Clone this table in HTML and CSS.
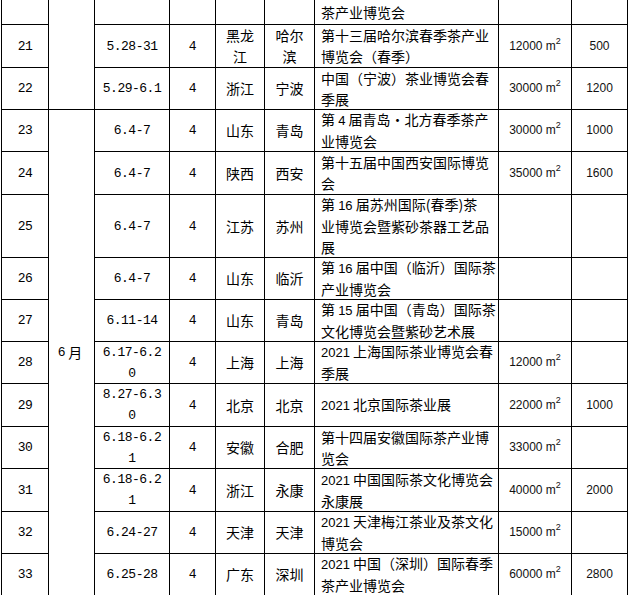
FILE: index.html
```html
<!DOCTYPE html>
<html lang="zh-CN">
<head>
<meta charset="utf-8">
<title>茶业博览会</title>
<link rel="stylesheet" href="styles.css">
</head>
<body>
<div class="sheet">
  <div class="c month m1"></div>
  <div class="c month m2"><span class="mono">6</span>&thinsp;月</div>

  <!-- row 20 (partial) -->
  <div class="c top"></div>
  <div class="c top"></div>
  <div class="c top"></div>
  <div class="c top"></div>
  <div class="c top"></div>
  <div class="c top ev"><div>茶产业博览会</div></div>
  <div class="c top"></div>
  <div class="c top"></div>

  <!-- 21 -->
  <div class="c mono">21</div>
  <div class="c mono">5.28-31</div>
  <div class="c mono">4</div>
  <div class="c cj"><div>黑龙<br>江</div></div>
  <div class="c cj"><div>哈尔<br>滨</div></div>
  <div class="c ev"><div>第十三届哈尔滨春季茶产业<br>博览会（春季）</div></div>
  <div class="c ar"><span>12000 m<sup>2</sup></span></div>
  <div class="c ar">500</div>

  <!-- 22 -->
  <div class="c mono">22</div>
  <div class="c mono">5.29-6.1</div>
  <div class="c mono">4</div>
  <div class="c cj">浙江</div>
  <div class="c cj">宁波</div>
  <div class="c ev"><div>中国（宁波）茶业博览会春<br>季展</div></div>
  <div class="c ar"><span>30000 m<sup>2</sup></span></div>
  <div class="c ar">1200</div>

  <!-- 23 -->
  <div class="c mono">23</div>
  <div class="c mono">6.4-7</div>
  <div class="c mono">4</div>
  <div class="c cj">山东</div>
  <div class="c cj">青岛</div>
  <div class="c ev"><div>第 <span class="n">4</span> 届青岛·北方春季茶产<br>业博览会</div></div>
  <div class="c ar"><span>30000 m<sup>2</sup></span></div>
  <div class="c ar">1000</div>

  <!-- 24 -->
  <div class="c mono">24</div>
  <div class="c mono">6.4-7</div>
  <div class="c mono">4</div>
  <div class="c cj">陕西</div>
  <div class="c cj">西安</div>
  <div class="c ev"><div>第十五届中国西安国际博览<br>会</div></div>
  <div class="c ar"><span>35000 m<sup>2</sup></span></div>
  <div class="c ar">1600</div>

  <!-- 25 -->
  <div class="c mono">25</div>
  <div class="c mono">6.4-7</div>
  <div class="c mono">4</div>
  <div class="c cj">江苏</div>
  <div class="c cj">苏州</div>
  <div class="c ev"><div>第 <span class="n">16</span> 届苏州国际(春季)茶<br>业博览会暨紫砂茶器工艺品<br>展</div></div>
  <div class="c ar"></div>
  <div class="c ar"></div>

  <!-- 26 -->
  <div class="c mono">26</div>
  <div class="c mono">6.4-7</div>
  <div class="c mono">4</div>
  <div class="c cj">山东</div>
  <div class="c cj">临沂</div>
  <div class="c ev"><div>第 <span class="n">16</span> 届中国（临沂）国际茶<br>产业博览会</div></div>
  <div class="c ar"></div>
  <div class="c ar"></div>

  <!-- 27 -->
  <div class="c mono">27</div>
  <div class="c mono">6.11-14</div>
  <div class="c mono">4</div>
  <div class="c cj">山东</div>
  <div class="c cj">青岛</div>
  <div class="c ev"><div>第 <span class="n">15</span> 届中国（青岛）国际茶<br>文化博览会暨紫砂艺术展</div></div>
  <div class="c ar"></div>
  <div class="c ar"></div>

  <!-- 28 -->
  <div class="c mono">28</div>
  <div class="c mono"><div>6.17-6.2<br>0</div></div>
  <div class="c mono">4</div>
  <div class="c cj">上海</div>
  <div class="c cj">上海</div>
  <div class="c ev"><div><span class="n">2021</span> 上海国际茶业博览会春<br>季展</div></div>
  <div class="c ar"><span>12000 m<sup>2</sup></span></div>
  <div class="c ar"></div>

  <!-- 29 -->
  <div class="c mono">29</div>
  <div class="c mono"><div>8.27-6.3<br>0</div></div>
  <div class="c mono">4</div>
  <div class="c cj">北京</div>
  <div class="c cj">北京</div>
  <div class="c ev"><div><span class="n">2021</span> 北京国际茶业展</div></div>
  <div class="c ar"><span>22000 m<sup>2</sup></span></div>
  <div class="c ar">1000</div>

  <!-- 30 -->
  <div class="c mono">30</div>
  <div class="c mono"><div>6.18-6.2<br>1</div></div>
  <div class="c mono">4</div>
  <div class="c cj">安徽</div>
  <div class="c cj">合肥</div>
  <div class="c ev"><div>第十四届安徽国际茶产业博<br>览会</div></div>
  <div class="c ar"><span>33000 m<sup>2</sup></span></div>
  <div class="c ar"></div>

  <!-- 31 -->
  <div class="c mono">31</div>
  <div class="c mono"><div>6.18-6.2<br>1</div></div>
  <div class="c mono">4</div>
  <div class="c cj">浙江</div>
  <div class="c cj">永康</div>
  <div class="c ev"><div><span class="n">2021</span> 中国国际茶文化博览会<br>永康展</div></div>
  <div class="c ar"><span>40000 m<sup>2</sup></span></div>
  <div class="c ar">2000</div>

  <!-- 32 -->
  <div class="c mono">32</div>
  <div class="c mono">6.24-27</div>
  <div class="c mono">4</div>
  <div class="c cj">天津</div>
  <div class="c cj">天津</div>
  <div class="c ev"><div><span class="n">2021</span> 天津梅江茶业及茶文化<br>博览会</div></div>
  <div class="c ar"><span>15000 m<sup>2</sup></span></div>
  <div class="c ar"></div>

  <!-- 33 -->
  <div class="c mono">33</div>
  <div class="c mono">6.25-28</div>
  <div class="c mono">4</div>
  <div class="c cj">广东</div>
  <div class="c cj">深圳</div>
  <div class="c ev"><div><span class="n">2021</span> 中国（深圳）国际春季<br>茶产业博览会</div></div>
  <div class="c ar"><span>60000 m<sup>2</sup></span></div>
  <div class="c ar">2800</div>
</div>
</body>
</html>
```

FILE: styles.css
```css
html, body {
  margin: 0;
  padding: 0;
  background: #fff;
}

body {
  width: 630px;
  height: 595px;
  overflow: hidden;
  color: #000;
  font-family: "Noto Sans CJK SC", sans-serif;
  font-size: 14px;
}

.sheet {
  display: grid;
  grid-template-columns: 47px 46px 75px 46px 49px 50px 184px 73px 56px;
  grid-template-rows: 25px 43px 42px 42px 43px 63px 42px 42px 42px 43px 42px 43px 42px 42px;
  margin-left: 1px;
  border-left: 1px solid #000;
  width: 626px;
}

.c {
  box-sizing: border-box;
  border-right: 1px solid #000;
  border-bottom: 1px solid #000;
  display: flex;
  align-items: center;
  justify-content: center;
  text-align: center;
  line-height: 21px;
  white-space: nowrap;
  overflow: visible;
}

.month {
  grid-column: 2;
}

.m1 {
  grid-row: 1 / span 3;
}

.m2 {
  grid-row: 4 / span 11;
  font-size: 14px;
  padding-right: 3px;
}

.mono {
  font-family: "Liberation Mono", "Noto Sans CJK SC", monospace;
  font-size: 13px;
  letter-spacing: -0.5px;
}

.month .mono {
  font-size: 13px;
  letter-spacing: 0;
}

.cj {
  font-size: 14px;
}

.ev {
  justify-content: flex-start;
  text-align: left;
  padding-left: 6px;
  font-size: 14px;
}

.n {
  font-family: "Liberation Sans", sans-serif;
  font-size: 13px;
}

.ar {
  font-family: "Liberation Sans", sans-serif;
  font-size: 12px;
  color: #111;
}

.ar sup {
  font-size: 9px;
  line-height: 1;
  position: relative;
  top: -1px;
  vertical-align: super;
}
```
